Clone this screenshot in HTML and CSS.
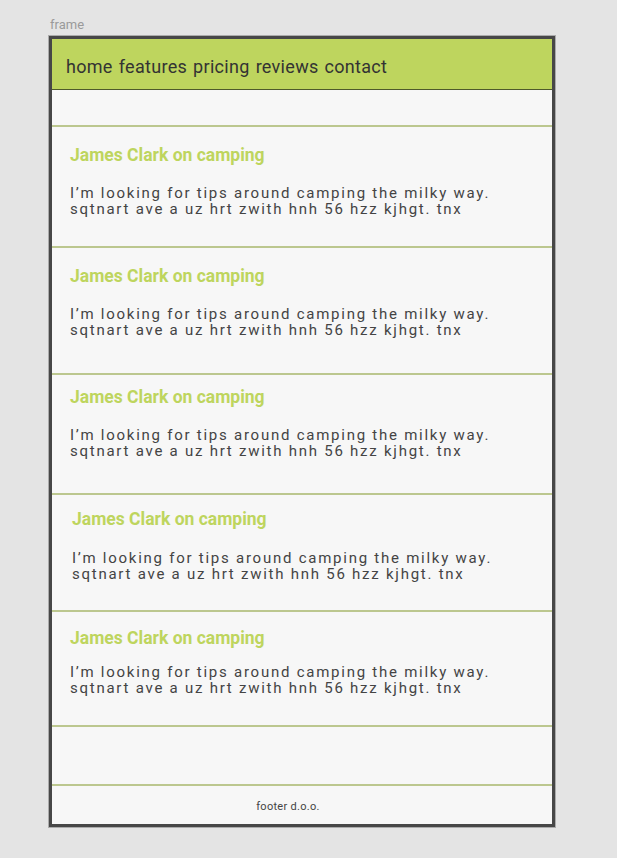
FILE: index.html
```html
<!DOCTYPE html>
<html>
<head>
<meta charset="utf-8">
<link rel="stylesheet" href="styles.css">
</head>
<body>
<div class="label">frame</div>
<div class="frame">
  <div class="inner">
    <header class="header">
      <nav class="nav">
        <span>home</span><span>features</span><span>pricing</span><span>reviews</span><span>contact</span>
      </nav>
    </header>
    <div class="spacer spacer-top"></div>
    <article class="post post-1">
      <h2 class="post-title">James Clark on camping</h2>
      <p class="post-body">I’m looking for tips around camping the milky way.<br>sqtnart ave a uz hrt zwith hnh 56 hzz kjhgt. tnx</p>
    </article>
    <article class="post post-2">
      <h2 class="post-title">James Clark on camping</h2>
      <p class="post-body">I’m looking for tips around camping the milky way.<br>sqtnart ave a uz hrt zwith hnh 56 hzz kjhgt. tnx</p>
    </article>
    <article class="post post-3">
      <h2 class="post-title">James Clark on camping</h2>
      <p class="post-body">I’m looking for tips around camping the milky way.<br>sqtnart ave a uz hrt zwith hnh 56 hzz kjhgt. tnx</p>
    </article>
    <article class="post post-4">
      <h2 class="post-title">James Clark on camping</h2>
      <p class="post-body">I’m looking for tips around camping the milky way.<br>sqtnart ave a uz hrt zwith hnh 56 hzz kjhgt. tnx</p>
    </article>
    <article class="post post-5">
      <h2 class="post-title">James Clark on camping</h2>
      <p class="post-body">I’m looking for tips around camping the milky way.<br>sqtnart ave a uz hrt zwith hnh 56 hzz kjhgt. tnx</p>
    </article>
    <div class="spacer spacer-bottom"></div>
    <footer class="footer">footer d.o.o.</footer>
  </div>
</div>
</body>
</html>
```

FILE: styles.css
```css
html, body {
  margin: 0;
  padding: 0;
}
body {
  background: #e4e4e4;
  font-family: Roboto, "Liberation Sans", sans-serif;
  width: 617px;
  height: 858px;
  overflow: hidden;
}
.label {
  margin: 17px 0 0 50px;
  font-size: 13px;
  line-height: 16px;
  height: 18px;
  color: #9a9a9a;
}
.frame {
  margin-left: 48px;
  width: 506px;
  height: 791px;
  border: 1px solid #ababab;
}
.inner {
  height: 785px;
  border: 3px solid #474747;
  background: #f7f7f7;
  display: flex;
  flex-direction: column;
}
.header {
  background: #bed55e;
  height: 50px;
  border-bottom: 1px solid #4f5a2a;
  display: flex;
  align-items: center;
  padding-left: 14px;
}
.nav {
  display: flex;
  gap: 6px;
  font-size: 18px;
  color: #333;
  letter-spacing: 0.3px;
  padding-top: 5px;
}
.spacer {
  border-bottom: 2px solid #bcc78f;
}
.spacer-top {
  height: 35px;
}
.spacer-bottom {
  height: 57px;
}
.post {
  border-bottom: 2px solid #bcc78f;
  padding-left: 18px;
}
.post-title {
  margin: 0;
  font-size: 17.5px;
  line-height: 20px;
  font-weight: 700;
  color: #bed55e;
}
.post-body {
  margin: 0;
  font-size: 15px;
  line-height: 16px;
  color: #444;
  letter-spacing: 1.75px;
}
.post-1 { padding-top: 18px; height: 101px; }
.post-1 .post-body { margin-top: 20px; }
.post-2 { padding-top: 18px; height: 107px; }
.post-2 .post-body { margin-top: 20px; }
.post-3 { padding-top: 12px; height: 106px; }
.post-3 .post-body { margin-top: 20px; }
.post-4 { padding-top: 14px; padding-left: 20px; height: 101px; }
.post-4 .post-body { margin-top: 21px; }
.post-5 { padding-top: 16px; height: 97px; }
.post-5 .post-body { margin-top: 16px; }
.footer {
  flex: 1;
  display: flex;
  align-items: center;
  justify-content: center;
  padding-right: 28px;
  padding-top: 2px;
  font-size: 11px;
  color: #444;
  letter-spacing: 0.3px;
}
```
